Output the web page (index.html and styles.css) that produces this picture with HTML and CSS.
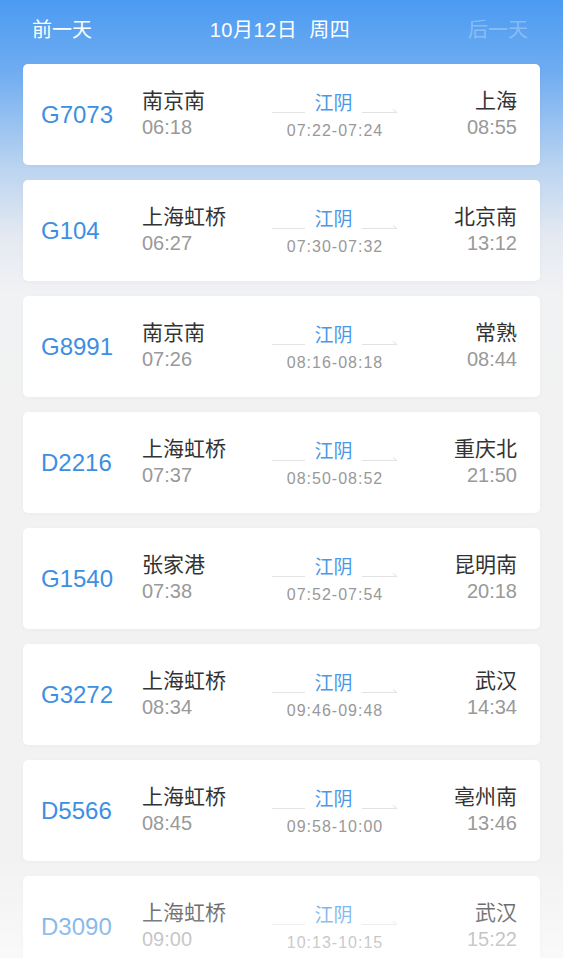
FILE: index.html
```html
<!DOCTYPE html>
<html>
  <head>
    <meta charset="utf-8">
    <title>车次列表</title>
    <link rel="stylesheet" href="styles.css">
  </head>
  <body>
    <header class="day-bar">
      <span class="day-link">前一天</span>
      <span class="day-current">10月12日&nbsp;&nbsp;周四</span>
      <span class="day-link disabled">后一天</span>
    </header>

    <ul class="train-list">
      <li class="train-card">
        <div class="train-no">G7073</div>
        <div class="station">
          <div class="station-name">南京南</div>
          <div class="station-time">06:18</div>
        </div>
        <div class="via">
          <div class="via-row">
            <span class="via-line"></span>
            <span class="via-name">江阴</span>
            <svg class="via-arrow" width="36" height="6" viewBox="0 0 36 6"><path d="M0 5.5H35L31 2.5" fill="none" stroke="#e2e2e2" stroke-width="1"/></svg>
          </div>
          <div class="via-time">07:22-07:24</div>
        </div>
        <div class="station end">
          <div class="station-name">上海</div>
          <div class="station-time">08:55</div>
        </div>
      </li>
      <li class="train-card">
        <div class="train-no">G104</div>
        <div class="station">
          <div class="station-name">上海虹桥</div>
          <div class="station-time">06:27</div>
        </div>
        <div class="via">
          <div class="via-row">
            <span class="via-line"></span>
            <span class="via-name">江阴</span>
            <svg class="via-arrow" width="36" height="6" viewBox="0 0 36 6"><path d="M0 5.5H35L31 2.5" fill="none" stroke="#e2e2e2" stroke-width="1"/></svg>
          </div>
          <div class="via-time">07:30-07:32</div>
        </div>
        <div class="station end">
          <div class="station-name">北京南</div>
          <div class="station-time">13:12</div>
        </div>
      </li>
      <li class="train-card">
        <div class="train-no">G8991</div>
        <div class="station">
          <div class="station-name">南京南</div>
          <div class="station-time">07:26</div>
        </div>
        <div class="via">
          <div class="via-row">
            <span class="via-line"></span>
            <span class="via-name">江阴</span>
            <svg class="via-arrow" width="36" height="6" viewBox="0 0 36 6"><path d="M0 5.5H35L31 2.5" fill="none" stroke="#e2e2e2" stroke-width="1"/></svg>
          </div>
          <div class="via-time">08:16-08:18</div>
        </div>
        <div class="station end">
          <div class="station-name">常熟</div>
          <div class="station-time">08:44</div>
        </div>
      </li>
      <li class="train-card">
        <div class="train-no">D2216</div>
        <div class="station">
          <div class="station-name">上海虹桥</div>
          <div class="station-time">07:37</div>
        </div>
        <div class="via">
          <div class="via-row">
            <span class="via-line"></span>
            <span class="via-name">江阴</span>
            <svg class="via-arrow" width="36" height="6" viewBox="0 0 36 6"><path d="M0 5.5H35L31 2.5" fill="none" stroke="#e2e2e2" stroke-width="1"/></svg>
          </div>
          <div class="via-time">08:50-08:52</div>
        </div>
        <div class="station end">
          <div class="station-name">重庆北</div>
          <div class="station-time">21:50</div>
        </div>
      </li>
      <li class="train-card">
        <div class="train-no">G1540</div>
        <div class="station">
          <div class="station-name">张家港</div>
          <div class="station-time">07:38</div>
        </div>
        <div class="via">
          <div class="via-row">
            <span class="via-line"></span>
            <span class="via-name">江阴</span>
            <svg class="via-arrow" width="36" height="6" viewBox="0 0 36 6"><path d="M0 5.5H35L31 2.5" fill="none" stroke="#e2e2e2" stroke-width="1"/></svg>
          </div>
          <div class="via-time">07:52-07:54</div>
        </div>
        <div class="station end">
          <div class="station-name">昆明南</div>
          <div class="station-time">20:18</div>
        </div>
      </li>
      <li class="train-card">
        <div class="train-no">G3272</div>
        <div class="station">
          <div class="station-name">上海虹桥</div>
          <div class="station-time">08:34</div>
        </div>
        <div class="via">
          <div class="via-row">
            <span class="via-line"></span>
            <span class="via-name">江阴</span>
            <svg class="via-arrow" width="36" height="6" viewBox="0 0 36 6"><path d="M0 5.5H35L31 2.5" fill="none" stroke="#e2e2e2" stroke-width="1"/></svg>
          </div>
          <div class="via-time">09:46-09:48</div>
        </div>
        <div class="station end">
          <div class="station-name">武汉</div>
          <div class="station-time">14:34</div>
        </div>
      </li>
      <li class="train-card">
        <div class="train-no">D5566</div>
        <div class="station">
          <div class="station-name">上海虹桥</div>
          <div class="station-time">08:45</div>
        </div>
        <div class="via">
          <div class="via-row">
            <span class="via-line"></span>
            <span class="via-name">江阴</span>
            <svg class="via-arrow" width="36" height="6" viewBox="0 0 36 6"><path d="M0 5.5H35L31 2.5" fill="none" stroke="#e2e2e2" stroke-width="1"/></svg>
          </div>
          <div class="via-time">09:58-10:00</div>
        </div>
        <div class="station end">
          <div class="station-name">亳州南</div>
          <div class="station-time">13:46</div>
        </div>
      </li>
      <li class="train-card">
        <div class="train-no">D3090</div>
        <div class="station">
          <div class="station-name">上海虹桥</div>
          <div class="station-time">09:00</div>
        </div>
        <div class="via">
          <div class="via-row">
            <span class="via-line"></span>
            <span class="via-name">江阴</span>
            <svg class="via-arrow" width="36" height="6" viewBox="0 0 36 6"><path d="M0 5.5H35L31 2.5" fill="none" stroke="#e2e2e2" stroke-width="1"/></svg>
          </div>
          <div class="via-time">10:13-10:15</div>
        </div>
        <div class="station end">
          <div class="station-name">武汉</div>
          <div class="station-time">15:22</div>
        </div>
      </li>
    </ul>

    <div class="bottom-fade"></div>
  </body>
</html>
```

FILE: styles.css
```css
body {
  margin: 0;
  font-family: "Liberation Sans", "Noto Sans CJK SC", sans-serif;
  background: linear-gradient(#4b9bf2 0px, #6eacf1 70px, #b9d3f0 165px, #e4e9f1 235px, #f1f2f4 295px, #f2f2f2 400px);
  background-repeat: no-repeat;
  background-color: #f2f2f2;
  min-height: 958px;
}

.day-bar {
  height: 56px;
  display: flex;
  align-items: center;
  justify-content: space-between;
  padding: 0 35px 0 32px;
  margin-bottom: 8px;
  color: #ffffff;
  font-size: 20px;
}

.day-current {
  letter-spacing: 0.5px;
}

.day-link.disabled {
  color: rgba(255, 255, 255, 0.3);
}

.train-list {
  list-style: none;
  margin: 0;
  padding: 0 23px;
}

.train-card {
  height: 101px;
  margin-bottom: 15px;
  background-color: #ffffff;
  border-radius: 5px;
  box-shadow: 0 1px 4px rgba(0, 0, 0, 0.03);
  display: grid;
  grid-template-columns: 101px 130px 126px 1fr;
  align-items: center;
  padding: 0 23px 0 18px;
}

.train-no {
  color: #3d8fe2;
  font-size: 24px;
}

.station-name {
  color: #333333;
  font-size: 21px;
  line-height: 27px;
  margin-top: -2px;
}

.station-time {
  color: #999999;
  font-size: 20px;
  line-height: 26px;
}

.station.end {
  text-align: right;
}

.via {
  display: flex;
  flex-direction: column;
  align-items: center;
  margin-top: 5px;
}

.via-row {
  display: flex;
  align-items: flex-end;
  gap: 9px;
}

.via-name {
  color: #4a97e8;
  font-size: 19px;
  line-height: 24px;
}

.via-line {
  width: 33px;
  height: 0;
  border-top: 1px solid #e4e4e4;
  margin-bottom: 3px;
}

.via-arrow {
  margin-bottom: 3px;
}

.via-time {
  color: #999999;
  font-size: 16px;
  letter-spacing: 1px;
  line-height: 24px;
  margin-top: 3px;
}

.bottom-fade {
  position: fixed;
  left: 0;
  right: 0;
  bottom: 0;
  height: 110px;
  background: linear-gradient(rgba(255, 255, 255, 0), rgba(255, 255, 255, 0.55));
  pointer-events: none;
}
```
